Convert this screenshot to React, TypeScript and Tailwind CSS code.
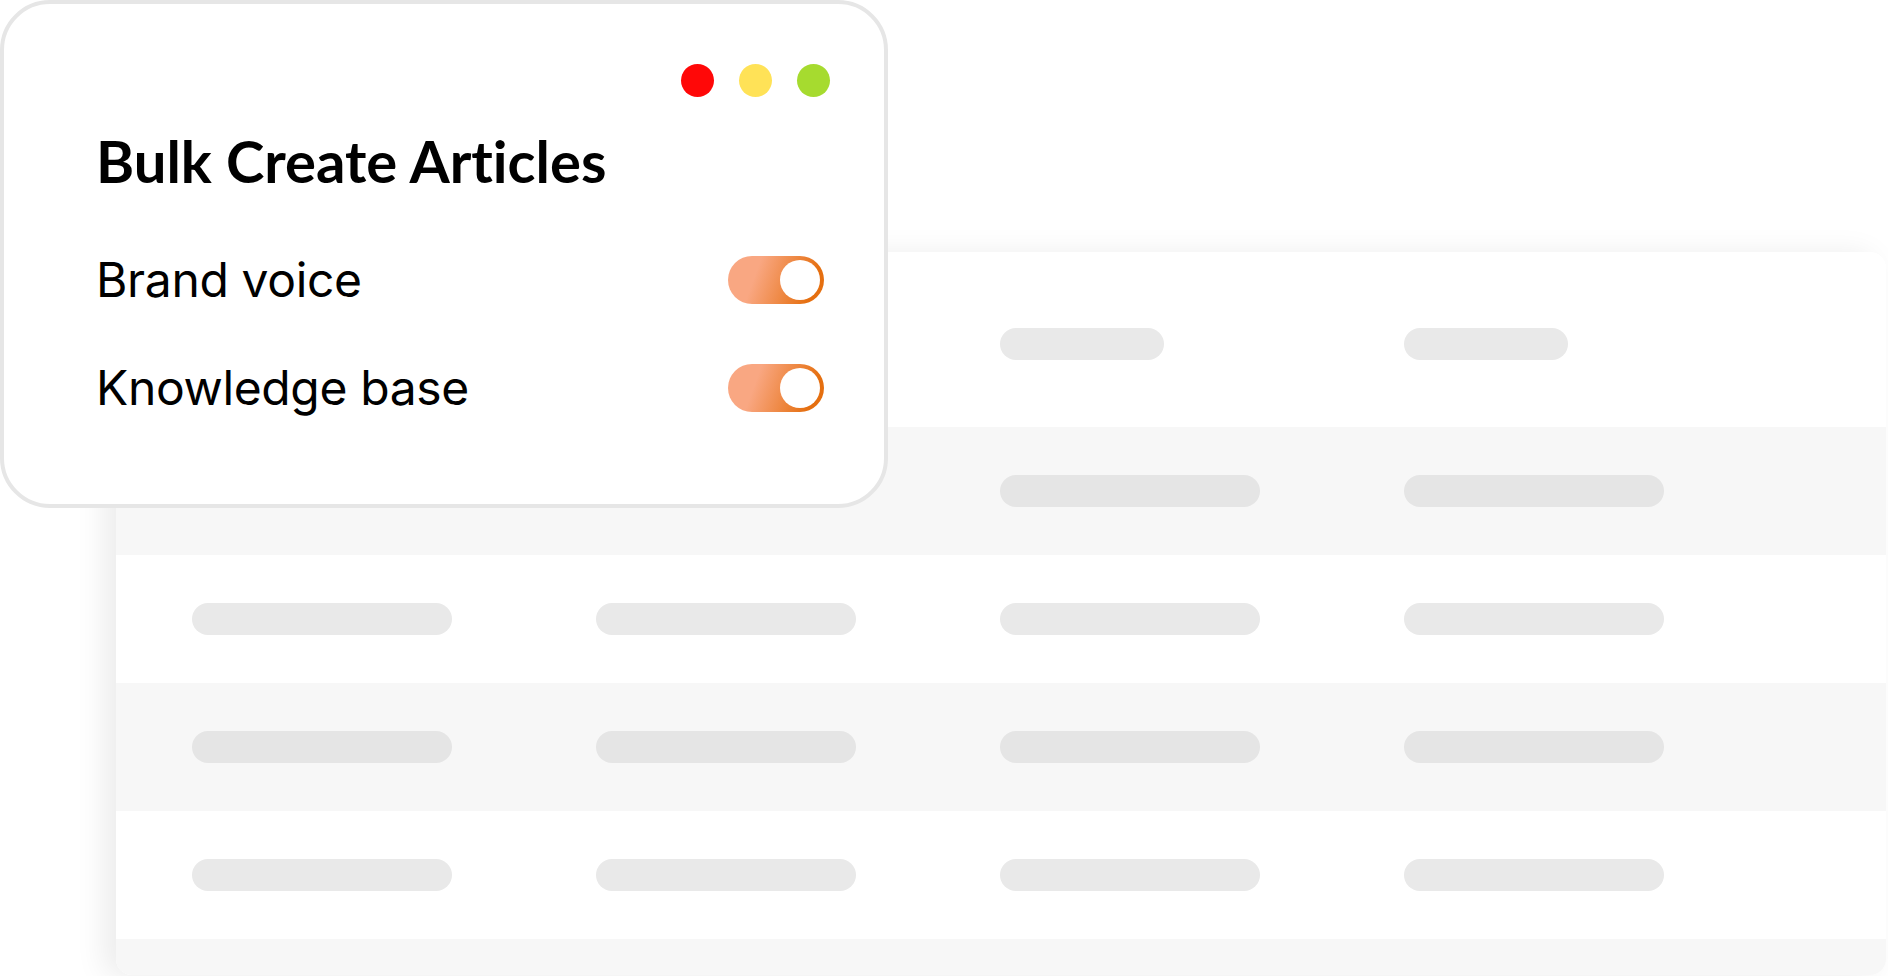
import React from "react";

const rows = [
  { header: true, shaded: false },
  { header: false, shaded: true },
  { header: false, shaded: false },
  { header: false, shaded: true },
  { header: false, shaded: false },
  { header: false, shaded: true },
];

function Toggle() {
  return (
    <div className="flex h-[48px] w-[96px] items-center justify-end rounded-full bg-[linear-gradient(110deg,#f9a782_30%,#e56f10_85%)] p-1">
      <div className="h-10 w-10 rounded-full bg-white" />
    </div>
  );
}

function SettingRow({ label }: { label: string }) {
  return (
    <div className="flex h-[48px] items-center justify-between pr-[60px]">
      <span className="font-['Inter',sans-serif] text-[48px] leading-none tracking-[-0.35px] text-black">{label}</span>
      <Toggle />
    </div>
  );
}

export default function App() {
  return (
    <div className="relative h-[976px] w-[1888px] overflow-hidden bg-white">
      {/* placeholder table behind the dialog */}
      <div className="pl-[116px] pt-[252px]">
        <div className="h-[723px] w-[1770px] overflow-hidden rounded-2xl bg-white shadow-[-12px_2px_30px_rgba(0,0,0,0.08)]">
          {rows.map((row, i) => (
            <div
              key={i}
              className={`grid shrink-0 grid-cols-[404px_404px_404px_404px] pl-[76px] ${
                row.header ? "h-[175px] items-start pt-[76px]" : "h-[128px] items-center"
              } ${row.shaded ? "bg-[#f7f7f7]" : "bg-white"}`}
            >
              {[0, 1, 2, 3].map((c) => (
                <div
                  key={c}
                  className={`h-8 rounded-full ${row.header ? "w-[164px]" : "w-[260px]"} ${
                    row.shaded ? "bg-[#e5e5e5]" : "bg-[#e9e9e9]"
                  }`}
                />
              ))}
            </div>
          ))}
        </div>
      </div>

      {/* dialog card */}
      <div className="absolute left-0 top-0 flex h-[508px] w-[888px] flex-col rounded-[50px] border-4 border-[#e6e6e6] bg-white pl-[92px] pt-[60px]">
        <div className="flex justify-end gap-[25px] pr-[54px]">
          <span className="h-[33px] w-[33px] rounded-full bg-[#ff0808]" />
          <span className="h-[33px] w-[33px] rounded-full bg-[#ffe257]" />
          <span className="h-[33px] w-[33px] rounded-full bg-[#a6db2f]" />
        </div>
        <h1 className="mt-[35px] font-['Lato',sans-serif] text-[58px] font-bold leading-none text-black [font-variant-ligatures:none]">
          Bulk Create Articles
        </h1>
        <div className="mt-[66px] flex flex-col gap-[60px]">
          <SettingRow label="Brand voice" />
          <SettingRow label="Knowledge base" />
        </div>
      </div>
    </div>
  );
}
